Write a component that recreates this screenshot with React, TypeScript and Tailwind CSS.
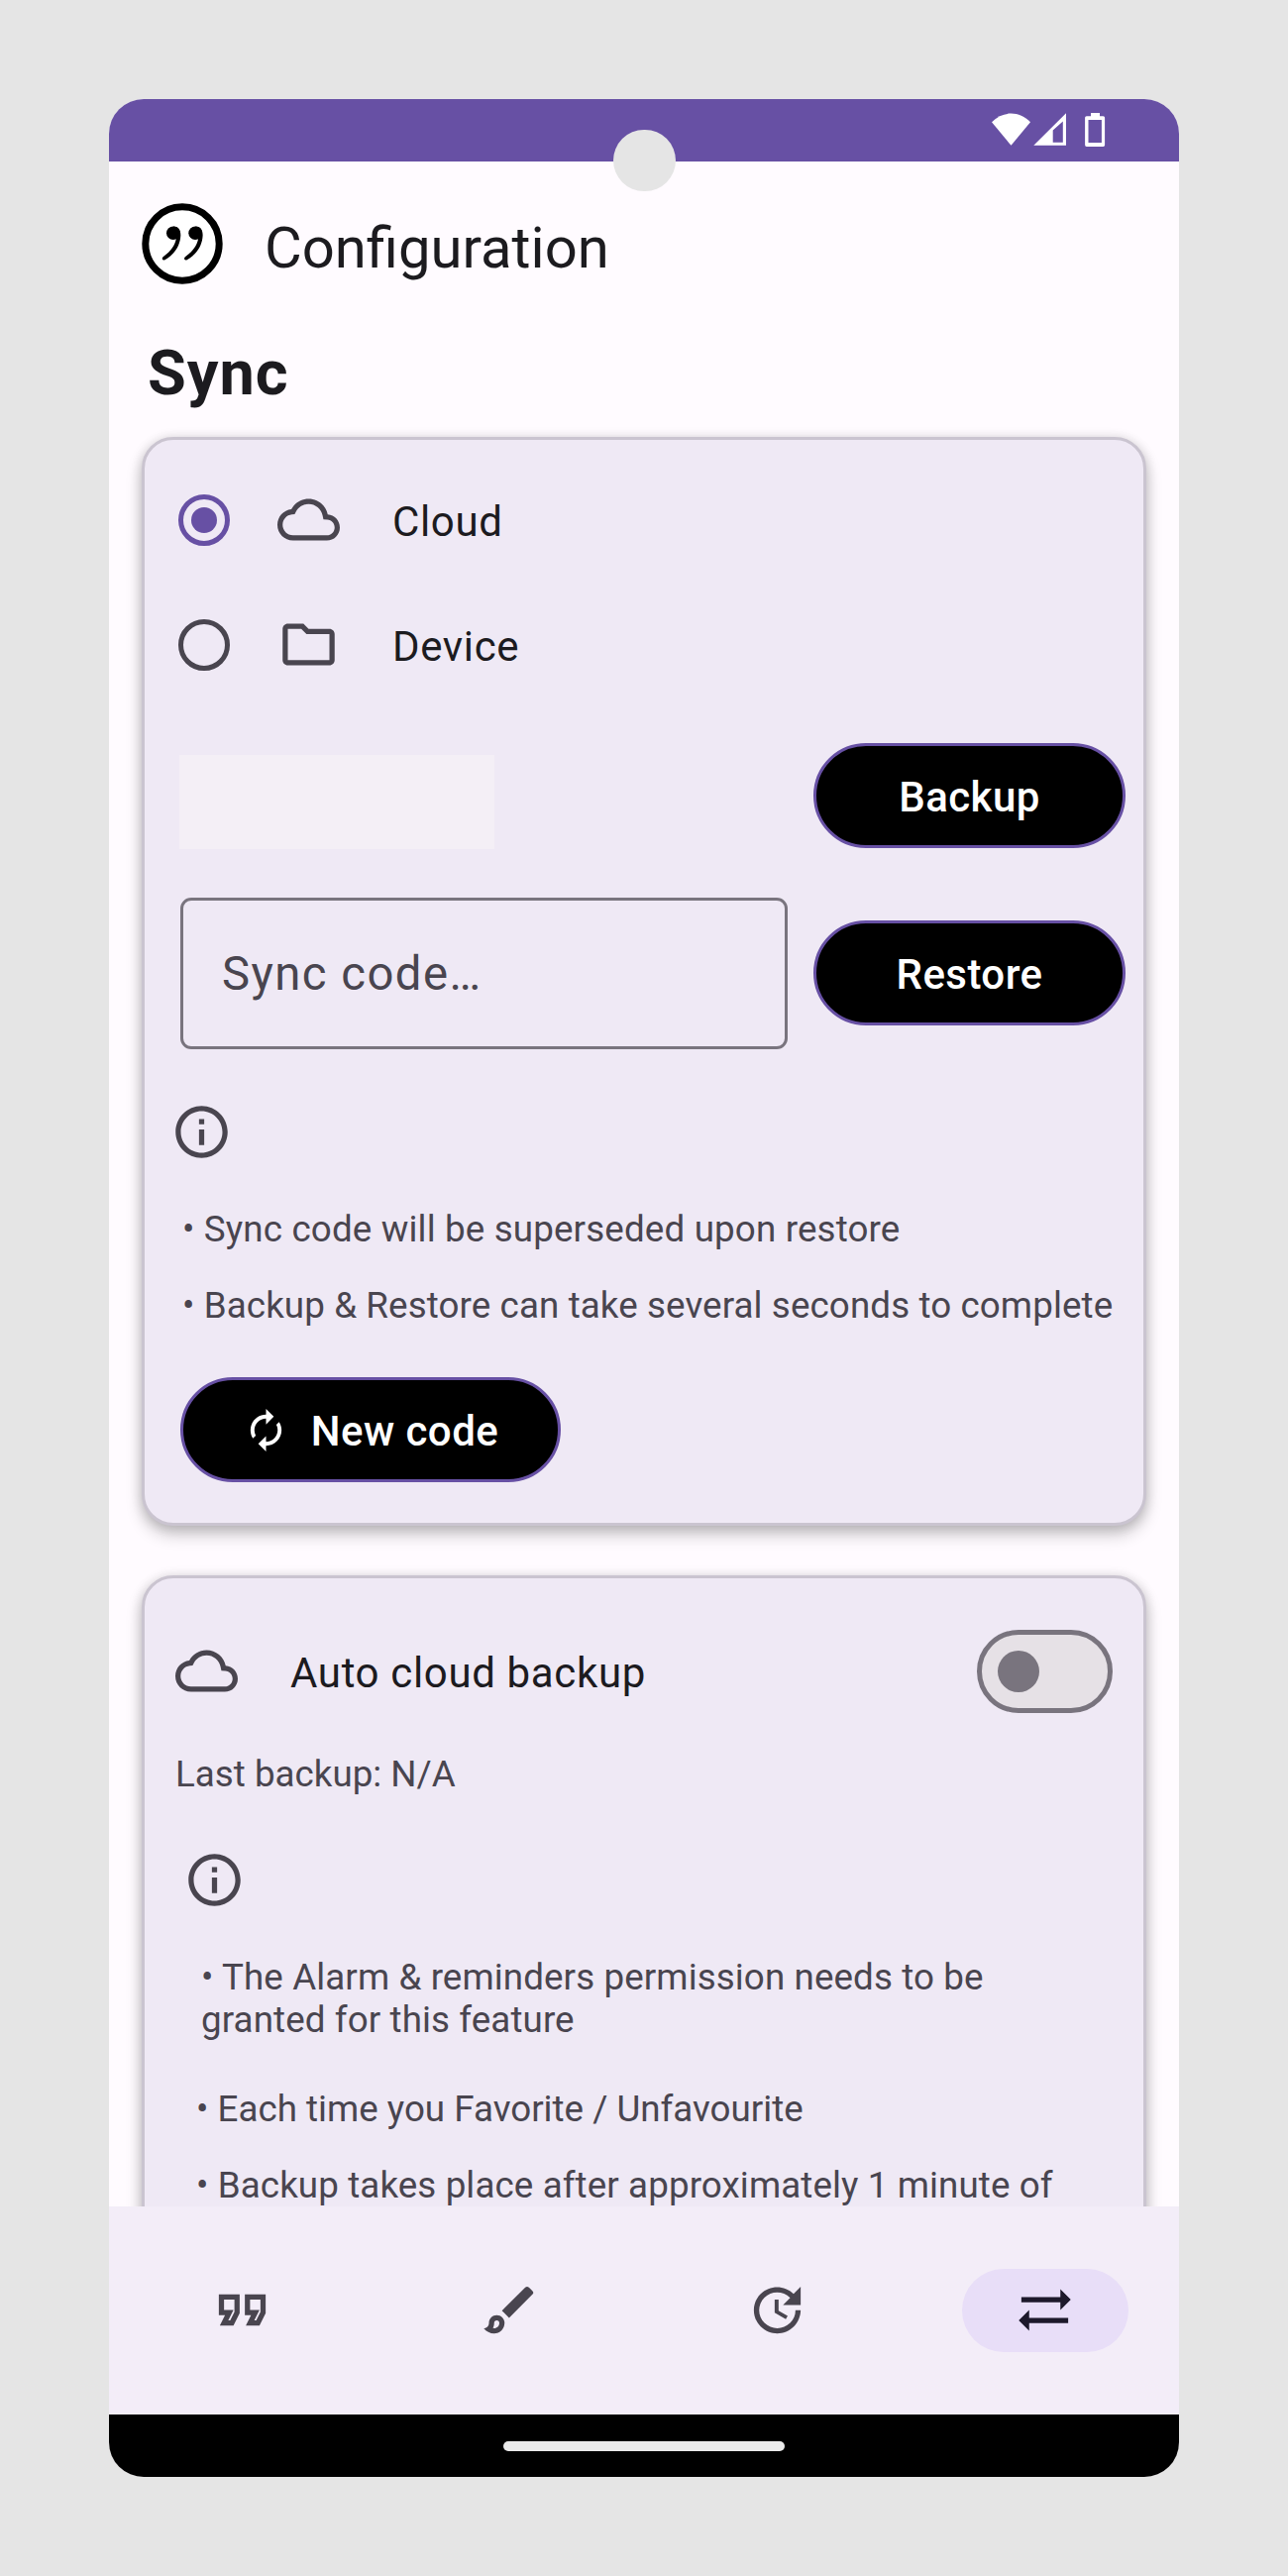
import type { ReactNode } from "react";
import {
  MdAutorenew,
  MdOutlineBrush,
  MdOutlineFolder,
  MdOutlineFormatQuote,
  MdOutlineInfo,
  MdSyncAlt,
  MdUpdate,
} from "react-icons/md";

function CloudIcon() {
  return (
    <svg viewBox="0 0 24 24" className="size-[63px] shrink-0 text-[#49454f]" fill="currentColor">
      <path d="M19.35 10.04C18.67 6.59 15.64 4 12 4 9.11 4 6.6 5.64 5.35 8.04 2.34 8.36 0 10.91 0 14c0 3.31 2.69 6 6 6h13c2.76 0 5-2.24 5-5 0-2.64-2.05-4.78-4.65-4.96zM19 18H6c-2.21 0-4-1.79-4-4 0-2.05 1.53-3.76 3.56-3.97l1.07-.11.5-.95C8.08 7.14 9.94 6 12 6c2.62 0 4.88 1.86 5.39 4.43l.3 1.5 1.53.11c1.56.1 2.78 1.41 2.78 2.96 0 1.65-1.35 3-3 3z" />
    </svg>
  );
}

function StatusBar() {
  return (
    <div className="relative flex h-[63px] shrink-0 justify-end bg-[#6750a4] pt-[14px] pr-[74px] text-white">
      <svg viewBox="0 0 116 35" className="h-[35px] w-[116px]" fill="currentColor">
        <path d="M1 9.3C12 -2.4 29 -2.4 40 9.3L20.5 32.8z" />
        <path fillRule="evenodd" d="M43.3 32.8L76 .2V32.8zM62.7 17.5V29.7H72.8V8.4z" />
        <path
          fillRule="evenodd"
          d="M101 0h9v3.2h3.5q1.6 0 1.6 1.6v27.4q0 1.8-1.6 1.8h-16.8q-1.6 0-1.6-1.8v-27.4q0-1.6 1.6-1.6h4.3zM98.5 7v23h13.4v-23z"
        />
      </svg>
      <div className="absolute top-[30.5px] left-[509px] size-[62.5px] rounded-full bg-[#e5e5e5]" />
    </div>
  );
}

function Logo() {
  return (
    <svg viewBox="0 0 82 82" className="mb-[1px] size-[82px] shrink-0">
      <circle cx="41" cy="41" r="37.2" fill="#fff" stroke="#000" strokeWidth="7" />
      {[0, 22.3].map((dx) => (
        <g key={dx} transform={`translate(${dx} 0)`}>
          <circle cx="31.8" cy="30.3" r="6.8" />
          <path d="M32 23.5C37 23.4 39.6 27 39.3 33C38.8 43 33 52 23.5 57.3Q21.3 58 20.7 56.3Q20.5 55 22.5 53.5C29.5 48.5 34.5 42 35 34z" />
        </g>
      ))}
    </svg>
  );
}

function Card({ children, className }: { children: ReactNode; className: string }) {
  return (
    <section
      className={`mx-[33px] flex shrink-0 flex-col rounded-[32px] border-[3px] border-[#cac4d0] bg-[#efe9f5] shadow-[0_9px_16px_rgba(0,0,0,0.22),0_1px_12px_rgba(0,0,0,0.14)] ${className}`}
    >
      {children}
    </section>
  );
}

function Option({ icon, label, checked }: { icon: ReactNode; label: string; checked?: boolean }) {
  return (
    <div className="flex h-[126px] items-center pl-[33.5px]">
      {checked ? (
        <span className="flex size-[52.5px] items-center justify-center rounded-full border-[5px] border-[#6750a4]">
          <span className="size-[26px] rounded-full bg-[#6750a4]" />
        </span>
      ) : (
        <span className="size-[52.5px] rounded-full border-[5px] border-[#49454f]" />
      )}
      <span className="mb-[1px] ml-[48px] text-[#49454f]">{icon}</span>
      <span className="mt-[3px] ml-[53px] text-[42px] tracking-[0.65px] text-[#1c1b1f]">{label}</span>
    </div>
  );
}

function PillButton({ children, className }: { children: ReactNode; className: string }) {
  return (
    <button
      className={`flex h-[106px] shrink-0 items-center justify-center rounded-full border-[3px] border-[#6750a4] bg-black text-[42px] font-medium tracking-[0.45px] text-white ${className}`}
    >
      {children}
    </button>
  );
}

function Note({ children, className }: { children: ReactNode; className?: string }) {
  return (
    <p className={`text-[36.75px] leading-[43px] whitespace-pre-line text-[#49454f] ${className ?? ""}`}>
      {children}
    </p>
  );
}

function NavItem({ children, active }: { children: ReactNode; active?: boolean }) {
  return (
    <div className="flex w-[270px] justify-center">
      <div
        className={`flex h-[84px] w-[168px] items-center justify-center rounded-full pr-[1px] pb-[1px] ${
          active ? "bg-[#e8def8] text-[#1d192b]" : "text-[#49454f]"
        }`}
      >
        {children}
      </div>
    </div>
  );
}

export default function App() {
  return (
    <div className="flex h-[2600px] w-[1300px] justify-center bg-[#e5e5e5] pt-[100px] font-[Roboto,sans-serif]">
      <div className="flex h-[2400px] w-[1080px] flex-col overflow-hidden rounded-[35px] bg-[#fffbff]">
        <StatusBar />

        <main className="flex h-[2064px] shrink-0 flex-col overflow-hidden">
          <header className="flex h-[167px] shrink-0 items-center pl-[32.5px]">
            <Logo />
            <h1 className="mt-[7px] ml-[42.5px] text-[58px] leading-[68px] text-[#1c1b1f]">Configuration</h1>
          </header>
          <h2 className="mt-[10px] h-[101px] shrink-0 pl-[39px] text-[63px] leading-[74px] font-bold tracking-[1px] text-[#1c1b1f]">
            Sync
          </h2>

          <Card className="h-[1099px] pt-[18px]">
            <Option checked label="Cloud" icon={<CloudIcon />} />
            <Option label="Device" icon={<MdOutlineFolder className="size-[63px]" />} />
            <div className="mt-[36px] flex h-[106px] justify-between pr-[18px] pl-[35px]">
              <div className="mt-[12px] h-[95px] w-[318px] bg-[#f4eff6]" />
              <PillButton className="w-[315px] pt-[2px]">Backup</PillButton>
            </div>
            <div className="mt-[50px] flex h-[153px] justify-between pr-[18px] pl-[36px]">
              <div className="flex h-[153px] w-[613px] items-center rounded-[11px] border-[3px] border-[#79747e] pt-[2px] pl-[39px] text-[47.25px] tracking-[1.45px] text-[#49454f]">
                Sync code…
              </div>
              <PillButton className="mt-[23px] w-[315px] pt-[2px]">Restore</PillButton>
            </div>
            <MdOutlineInfo className="mt-[52px] ml-[26px] size-[63px] shrink-0 text-[#49454f]" />
            <div className="mt-[45px] flex flex-col gap-[34px] pl-[38px]">
              <Note className="tracking-[0.15px]">• Sync code will be superseded upon restore</Note>
              <Note className="tracking-[0.1px]">• Backup &amp; Restore can take several seconds to complete</Note>
            </div>
            <PillButton className="mt-[51px] ml-[36px] w-[384px]">
              <MdAutorenew className="mr-[22px] size-[47px]" />
              <span className="pt-[2px]">New code</span>
            </PillButton>
          </Card>

          <Card className="mt-[50px] h-[900px] pt-[49px]">
            <div className="flex h-[88px] items-center pr-[31px] pl-[31px]">
              <CloudIcon />
              <span className="mt-[5px] ml-[53px] text-[42px] tracking-[0.65px] text-[#1c1b1f]">
                Auto cloud backup
              </span>
              <span className="mt-[2px] ml-auto flex h-[84px] w-[137px] items-center rounded-full border-[5px] border-[#79747e] bg-[#e6e1e6] pl-[16px]">
                <span className="size-[42px] rounded-full bg-[#79747e]" />
              </span>
            </div>
            <Note className="mt-[39px] pl-[31px]">Last backup: N/A</Note>
            <MdOutlineInfo className="mt-[54px] ml-[39px] size-[63px] shrink-0 text-[#49454f]" />
            <Note className="mt-[45px] pl-[57px] tracking-[0.1px]">
              {"• The Alarm & reminders permission needs to be\ngranted for this feature"}
            </Note>
            <Note className="mt-[47px] pl-[52px]">• Each time you Favorite / Unfavourite</Note>
            <Note className="mt-[34px] pl-[52px] tracking-[0.1px]">
              • Backup takes place after approximately 1 minute of
            </Note>
          </Card>
        </main>

        <nav className="flex h-[210px] shrink-0 items-center bg-[#f3edf8]">
          <NavItem>
            <MdOutlineFormatQuote className="size-[63px]" />
          </NavItem>
          <NavItem>
            <MdOutlineBrush className="size-[63px]" />
          </NavItem>
          <NavItem>
            <MdUpdate className="size-[63px]" />
          </NavItem>
          <NavItem active>
            <MdSyncAlt className="size-[63px]" />
          </NavItem>
        </nav>
        <div className="flex h-[63px] shrink-0 items-center justify-center bg-black">
          <div className="h-[10px] w-[284px] rounded-full bg-[#ebebeb]" />
        </div>
      </div>
    </div>
  );
}
